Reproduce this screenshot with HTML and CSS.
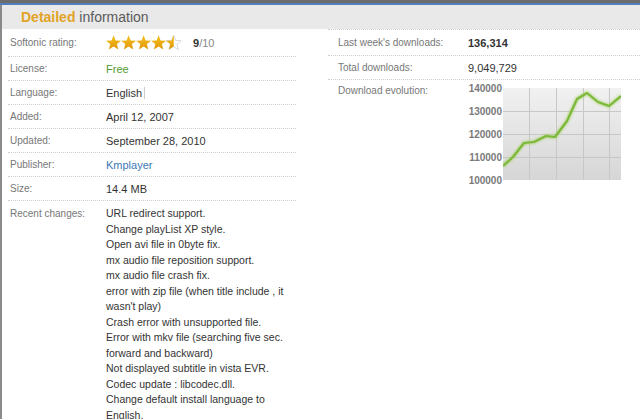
FILE: index.html
```html
<!DOCTYPE html>
<html>
<head>
<meta charset="utf-8">
<link rel="stylesheet" href="styles.css">
</head>
<body>
<div class="topbar"></div>
<div class="accent"></div>
<div class="frame">
  <div class="header"><span class="hl">Detailed</span> information</div>
  <div class="content">
    <div class="col-left">
      <div class="row row-first">
        <span class="label">Softonic rating:</span>
        <span class="value rating">
          <svg class="stars" width="76" height="16" viewBox="0 0 76 16">
            <defs>
              <linearGradient id="gold" x1="0" y1="0" x2="0" y2="1">
                <stop offset="0" stop-color="#f7c21c"/>
                <stop offset="1" stop-color="#e0960a"/>
              </linearGradient>
              <clipPath id="half"><rect x="0" y="0" width="7.8" height="16"/></clipPath>
            </defs>
            <path d="M7.6 0.3 L9.6 5.4 L15.1 5.7 L10.9 9.1 L12.3 14.6 L7.6 11.6 L2.9 14.6 L4.3 9.1 L0.1 5.7 L5.6 5.4 Z" fill="url(#gold)"/>
            <path transform="translate(15 0)" d="M7.6 0.3 L9.6 5.4 L15.1 5.7 L10.9 9.1 L12.3 14.6 L7.6 11.6 L2.9 14.6 L4.3 9.1 L0.1 5.7 L5.6 5.4 Z" fill="url(#gold)"/>
            <path transform="translate(30 0)" d="M7.6 0.3 L9.6 5.4 L15.1 5.7 L10.9 9.1 L12.3 14.6 L7.6 11.6 L2.9 14.6 L4.3 9.1 L0.1 5.7 L5.6 5.4 Z" fill="url(#gold)"/>
            <path transform="translate(45 0)" d="M7.6 0.3 L9.6 5.4 L15.1 5.7 L10.9 9.1 L12.3 14.6 L7.6 11.6 L2.9 14.6 L4.3 9.1 L0.1 5.7 L5.6 5.4 Z" fill="url(#gold)"/>
            <path transform="translate(60 0)" d="M7.6 0.3 L9.6 5.4 L15.1 5.7 L10.9 9.1 L12.3 14.6 L7.6 11.6 L2.9 14.6 L4.3 9.1 L0.1 5.7 L5.6 5.4 Z" fill="none" stroke="#cfcfcf" stroke-width="0.8"/>
            <path transform="translate(60 0)" clip-path="url(#half)" d="M7.6 0.3 L9.6 5.4 L15.1 5.7 L10.9 9.1 L12.3 14.6 L7.6 11.6 L2.9 14.6 L4.3 9.1 L0.1 5.7 L5.6 5.4 Z" fill="url(#gold)"/>
          </svg>
          <span class="score"><b>9</b>/10</span>
        </span>
      </div>
      <div class="row"><span class="label">License:</span><span class="value free">Free</span></div>
      <div class="row"><span class="label">Language:</span><span class="value"><span class="lang">English</span></span></div>
      <div class="row"><span class="label">Added:</span><span class="value">April 12, 2007</span></div>
      <div class="row"><span class="label">Updated:</span><span class="value">September 28, 2010</span></div>
      <div class="row"><span class="label">Publisher:</span><span class="value link">Kmplayer</span></div>
      <div class="row"><span class="label">Size:</span><span class="value">14.4 MB</span></div>
      <div class="row row-changes">
        <span class="label">Recent changes:</span>
        <span class="value changes">URL redirect support.<br>Change playList XP style.<br>Open avi file in 0byte fix.<br>mx audio file reposition support.<br>mx audio file crash fix.<br>error with zip file (when title include , it wasn't play)<br>Crash error with unsupported file.<br>Error with mkv file (searching five sec. forward and backward)<br>Not displayed subtitle in vista EVR.<br>Codec update : libcodec.dll.<br>Change default install language to English.</span>
      </div>
    </div>
    <div class="col-right">
      <div class="rrow rrow-first"><span class="label">Last week's downloads:</span><span class="value strong">136,314</span></div>
      <div class="rrow"><span class="label">Total downloads:</span><span class="value">9,049,729</span></div>
      <div class="rrow rrow-chart">
        <span class="label">Download evolution:</span>
        <div class="chart">
          <div class="yaxis">
            <span>140000</span><span>130000</span><span>120000</span><span>110000</span><span>100000</span>
          </div>
          <svg class="plot" width="118" height="92" viewBox="0 0 118 92">
            <defs>
              <linearGradient id="bg" x1="0" y1="0" x2="0" y2="1">
                <stop offset="0" stop-color="#f1f1f1"/>
                <stop offset="1" stop-color="#d6d6d6"/>
              </linearGradient>
              <filter id="glow" x="-10%" y="-10%" width="120%" height="120%">
                <feGaussianBlur stdDeviation="0.8"/>
              </filter>
            </defs>
            <rect x="0" y="0" width="118" height="92" fill="url(#bg)"/>
            <g stroke="#c7c7c7" stroke-width="1">
              <line x1="26.5" y1="0" x2="26.5" y2="92"/>
              <line x1="53.5" y1="0" x2="53.5" y2="92"/>
              <line x1="80.5" y1="0" x2="80.5" y2="92"/>
              <line x1="106.5" y1="0" x2="106.5" y2="92"/>
              <line x1="0" y1="23.5" x2="118" y2="23.5"/>
              <line x1="0" y1="46.5" x2="118" y2="46.5"/>
              <line x1="0" y1="69.5" x2="118" y2="69.5"/>
            </g>
            <polyline points="0,78 10,69 21,55 31,54 43,48 52,49 64,33 74,11 84,5 95,14 106,18 118,8" fill="none" stroke="#a9d46a" stroke-width="4" stroke-linejoin="round" filter="url(#glow)" opacity="0.7"/>
            <polyline points="0,78 10,69 21,55 31,54 43,48 52,49 64,33 74,11 84,5 95,14 106,18 118,8" fill="none" stroke="#7cb83a" stroke-width="2.2" stroke-linejoin="round"/>
          </svg>
        </div>
      </div>
    </div>
  </div>
</div>
</body>
</html>
```

FILE: styles.css
```css
html, body {
  margin: 0;
  padding: 0;
  background: #ffffff;
  font-family: "Liberation Sans", Arial, sans-serif;
}
.topbar {
  height: 3px;
  background: #6c6c6c;
}
.accent {
  height: 2px;
  background: #4f7fba;
}
.frame {
  border-left: 2px solid #8a8a8a;
  height: 414px;
  box-sizing: border-box;
}
.header {
  height: 24px;
  line-height: 24px;
  background: #e9e9e9;
  padding-left: 19px;
  font-size: 14px;
  color: #5a5a5a;
}
.hl {
  color: #e2a326;
  font-weight: bold;
}
.content {
  display: grid;
  grid-template-columns: 288px 1fr;
  column-gap: 32px;
  padding-left: 6px;
}
.row {
  display: grid;
  grid-template-columns: 96px 1fr;
  align-items: center;
  height: 24px;
  padding-left: 2px;
  border-bottom: 1px dotted #cfcfcf;
  box-sizing: border-box;
}
.row-first {
  height: 28px;
}
.label {
  font-size: 10px;
  color: #777777;
}
.value {
  font-size: 11px;
  color: #333333;
}
.rating {
  display: flex;
  align-items: center;
  gap: 11px;
  padding-top: 1px;
}
.stars {
  display: block;
}
.score {
  color: #888888;
  font-size: 11px;
}
.score b {
  color: #333333;
}
.free {
  color: #4f9a2c;
}
.lang {
  padding-right: 2px;
  border-right: 1px solid #cccccc;
}
.link {
  color: #3b78b5;
}
.row-changes {
  height: auto;
  align-items: start;
  padding-top: 5px;
  border-bottom: none;
}
.row-changes .label {
  line-height: 15.5px;
}
.changes {
  line-height: 15.5px;
  font-size: 10.5px;
  max-width: 180px;
}
.col-right {
  border-top: 1px dotted #cfcfcf;
}
.rrow {
  display: grid;
  grid-template-columns: 130px 1fr;
  align-items: center;
  height: 24px;
  padding-left: 10px;
  border-bottom: 1px dotted #cfcfcf;
  box-sizing: border-box;
}
.rrow-first {
  height: 26px;
}
.strong {
  font-weight: bold;
}
.rrow-chart {
  height: auto;
  align-items: start;
  border-bottom: none;
  padding-top: 5px;
}
.chart {
  display: flex;
  margin-left: -2px;
  padding-top: 3px;
}
.yaxis {
  display: grid;
  grid-template-rows: repeat(5, 23px);
  margin-top: -11.5px;
  width: 36px;
  text-align: right;
  padding-right: 1px;
}
.yaxis span {
  font-size: 10px;
  font-weight: bold;
  color: #7a7a7a;
  line-height: 23px;
}
.plot {
  display: block;
}
```
